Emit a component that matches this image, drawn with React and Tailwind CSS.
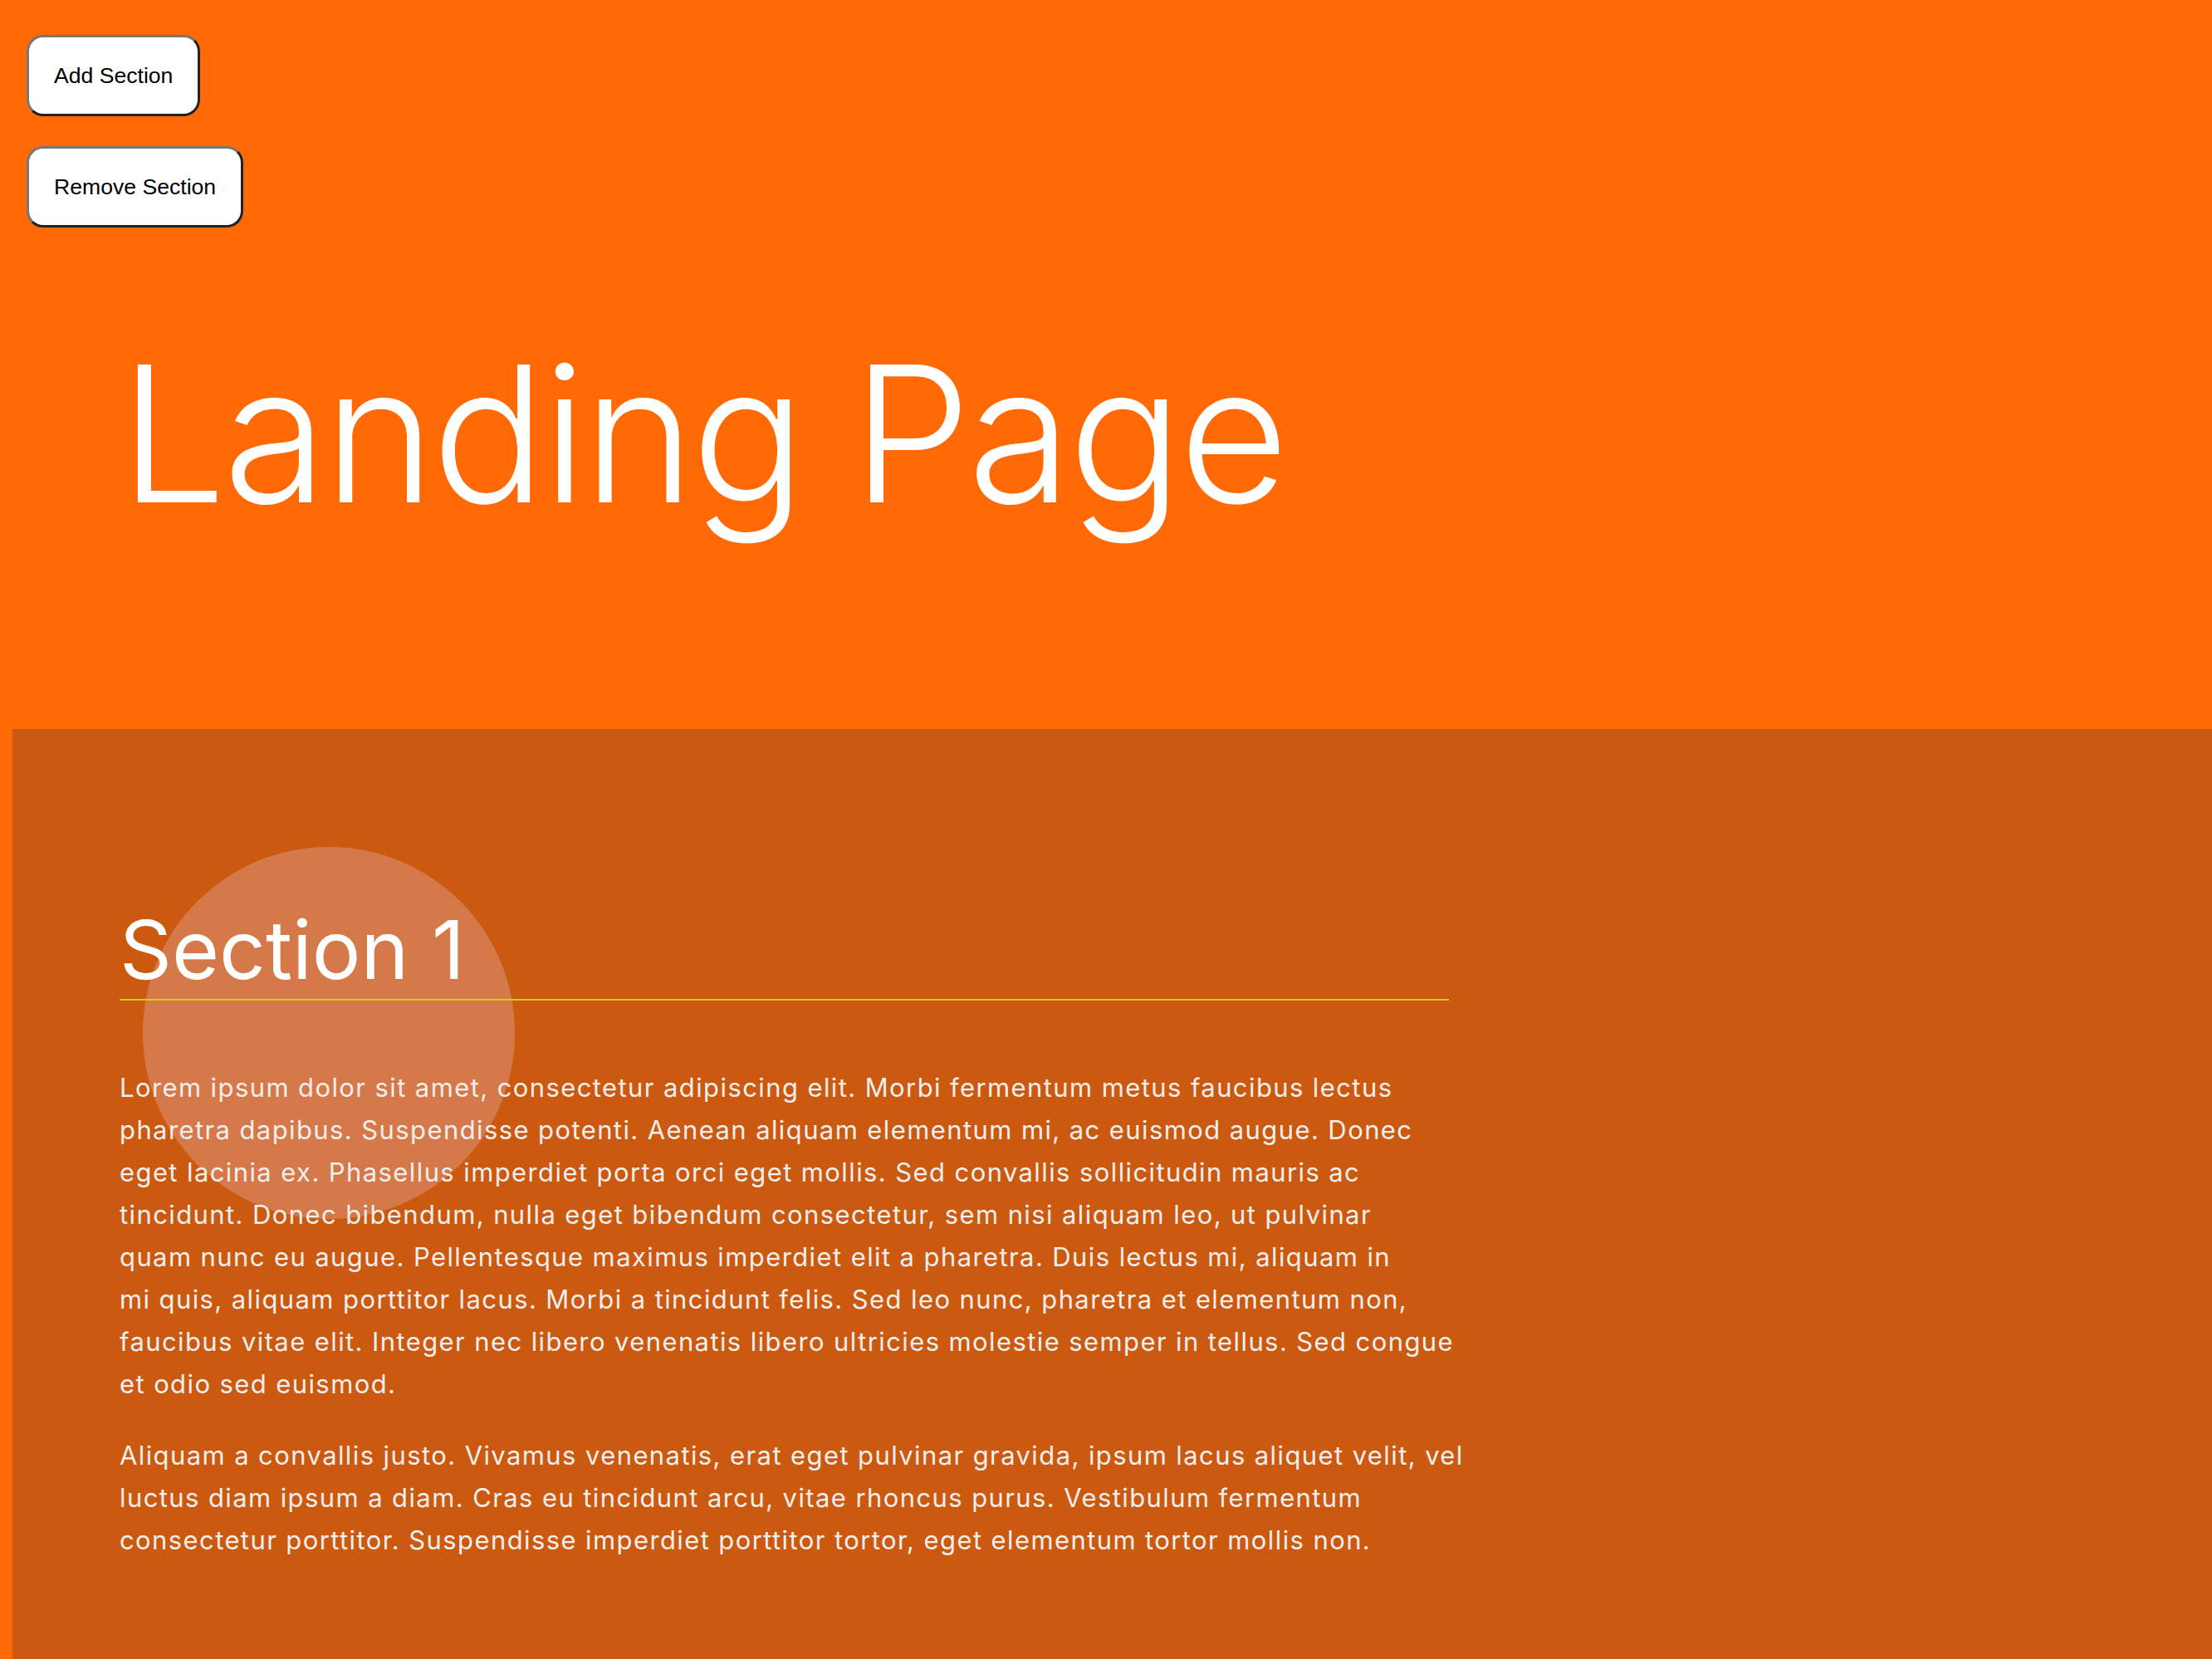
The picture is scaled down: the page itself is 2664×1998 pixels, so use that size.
import React from "react";

const p1 = [
  "Lorem ipsum dolor sit amet, consectetur adipiscing elit. Morbi fermentum metus faucibus lectus",
  "pharetra dapibus. Suspendisse potenti. Aenean aliquam elementum mi, ac euismod augue. Donec",
  "eget lacinia ex. Phasellus imperdiet porta orci eget mollis. Sed convallis sollicitudin mauris ac",
  "tincidunt. Donec bibendum, nulla eget bibendum consectetur, sem nisi aliquam leo, ut pulvinar",
  "quam nunc eu augue. Pellentesque maximus imperdiet elit a pharetra. Duis lectus mi, aliquam in",
  "mi quis, aliquam porttitor lacus. Morbi a tincidunt felis. Sed leo nunc, pharetra et elementum non,",
  "faucibus vitae elit. Integer nec libero venenatis libero ultricies molestie semper in tellus. Sed congue",
  "et odio sed euismod.",
];
const p2 = [
  "Aliquam a convallis justo. Vivamus venenatis, erat eget pulvinar gravida, ipsum lacus aliquet velit, vel",
  "luctus diam ipsum a diam. Cras eu tincidunt arcu, vitae rhoncus purus. Vestibulum fermentum",
  "consectetur porttitor. Suspendisse imperdiet porttitor tortor, eget elementum tortor mollis non.",
];

function Lines({ lines, className }) {
  return (
    <p className={className}>
      {lines.map((l, i) => (
        <React.Fragment key={i}>
          {l}
          {i < lines.length - 1 && <br />}
        </React.Fragment>
      ))}
    </p>
  );
}

function Btn({ children }) {
  return (
    <button className="h-[98px] px-[30px] rounded-[20px] bg-white border-[3px] border-t-[#777777] border-l-[#777777] border-b-[#222222] border-r-[#222222] text-black text-[26.6px] leading-none font-['Liberation_Sans',Arial,sans-serif]">
      {children}
    </button>
  );
}

export default function App() {
  return (
    <div className="min-h-screen flex flex-col bg-[#ff6a06] overflow-hidden">
      <div className="flex flex-col items-start gap-[36px] pt-[42px] pl-[32px]">
        <Btn>Add Section</Btn>
        <Btn>Remove Section</Btn>
      </div>
      <h1 className="mt-[134px] pl-[144px] text-white text-[228px] leading-none font-light font-['Inter',sans-serif] tracking-[-4px]">
        Landing Page
      </h1>
      <section className="relative flex-1 ml-[15px] mt-[242px] bg-[#cb5a10] pt-[217px] pl-[129px] pb-[120px]">
        <div className="absolute left-[157px] top-[142px] w-[448px] h-[448px] rounded-full bg-[#d6794a]" />
        <div className="relative w-[1601px]">
          <h2 className="text-white text-[98px] leading-none font-normal font-['Inter',sans-serif]">
            Section 1
          </h2>
          <div className="mt-[10px] h-[2px] bg-[#c8d40c]" />
          <div className="mt-[79px] flex flex-col gap-[35px] text-[#f1efed] text-[31px] leading-[51px] tracking-[1.4px] font-['Inter',sans-serif] whitespace-nowrap">
            <Lines lines={p1} />
            <Lines lines={p2} />
          </div>
        </div>
      </section>
    </div>
  );
}
